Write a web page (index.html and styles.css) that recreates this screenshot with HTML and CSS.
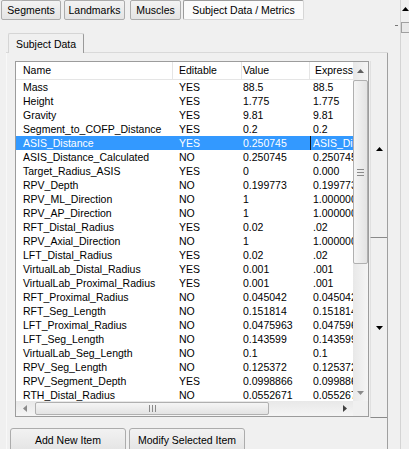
FILE: index.html
```html
<!DOCTYPE html>
<html>
<head>
<meta charset="utf-8">
<link rel="stylesheet" href="styles.css">
</head>
<body>
<div class="window">
  <div class="main">
    <div class="tabs">
      <div class="tab t1">Segments</div>
      <div class="tab t2">Landmarks</div>
      <div class="tab t3">Muscles</div>
      <div class="tab t4 active">Subject Data / Metrics</div>
    </div>
    <div class="subtabs">
      <div class="sub-edge"></div>
      <div class="subtab">Subject Data</div>
      <div class="sub-fill"></div>
    </div>
    <div class="pane">
      <div class="pane-body">
        <div class="list">
          <div class="list-content">
            <div class="row hdr"><span class="c1">Name</span><span class="c2">Editable</span><span class="c3">Value</span><span class="c4">Expression</span></div>
            <div class="row"><span class="c1">Mass</span><span class="c2">YES</span><span class="c3">88.5</span><span class="c4">88.5</span></div>
            <div class="row"><span class="c1">Height</span><span class="c2">YES</span><span class="c3">1.775</span><span class="c4">1.775</span></div>
            <div class="row"><span class="c1">Gravity</span><span class="c2">YES</span><span class="c3">9.81</span><span class="c4">9.81</span></div>
            <div class="row"><span class="c1">Segment_to_COFP_Distance</span><span class="c2">YES</span><span class="c3">0.2</span><span class="c4">0.2</span></div>
            <div class="row sel"><span class="c1">ASIS_Distance</span><span class="c2">YES</span><span class="c3">0.250745</span><span class="c4">ASIS_Distance</span></div>
            <div class="row"><span class="c1">ASIS_Distance_Calculated</span><span class="c2">NO</span><span class="c3">0.250745</span><span class="c4">0.250745</span></div>
            <div class="row"><span class="c1">Target_Radius_ASIS</span><span class="c2">YES</span><span class="c3">0</span><span class="c4">0.000</span></div>
            <div class="row"><span class="c1">RPV_Depth</span><span class="c2">NO</span><span class="c3">0.199773</span><span class="c4">0.199773</span></div>
            <div class="row"><span class="c1">RPV_ML_Direction</span><span class="c2">NO</span><span class="c3">1</span><span class="c4">1.000000</span></div>
            <div class="row"><span class="c1">RPV_AP_Direction</span><span class="c2">NO</span><span class="c3">1</span><span class="c4">1.000000</span></div>
            <div class="row"><span class="c1">RFT_Distal_Radius</span><span class="c2">YES</span><span class="c3">0.02</span><span class="c4">.02</span></div>
            <div class="row"><span class="c1">RPV_Axial_Direction</span><span class="c2">NO</span><span class="c3">1</span><span class="c4">1.000000</span></div>
            <div class="row"><span class="c1">LFT_Distal_Radius</span><span class="c2">YES</span><span class="c3">0.02</span><span class="c4">.02</span></div>
            <div class="row"><span class="c1">VirtualLab_Distal_Radius</span><span class="c2">YES</span><span class="c3">0.001</span><span class="c4">.001</span></div>
            <div class="row"><span class="c1">VirtualLab_Proximal_Radius</span><span class="c2">YES</span><span class="c3">0.001</span><span class="c4">.001</span></div>
            <div class="row"><span class="c1">RFT_Proximal_Radius</span><span class="c2">NO</span><span class="c3">0.045042</span><span class="c4">0.045042</span></div>
            <div class="row"><span class="c1">RFT_Seg_Length</span><span class="c2">NO</span><span class="c3">0.151814</span><span class="c4">0.151814</span></div>
            <div class="row"><span class="c1">LFT_Proximal_Radius</span><span class="c2">NO</span><span class="c3">0.0475963</span><span class="c4">0.0475963</span></div>
            <div class="row"><span class="c1">LFT_Seg_Length</span><span class="c2">NO</span><span class="c3">0.143599</span><span class="c4">0.143599</span></div>
            <div class="row"><span class="c1">VirtualLab_Seg_Length</span><span class="c2">NO</span><span class="c3">0.1</span><span class="c4">0.1</span></div>
            <div class="row"><span class="c1">RPV_Seg_Length</span><span class="c2">NO</span><span class="c3">0.125372</span><span class="c4">0.125372</span></div>
            <div class="row"><span class="c1">RPV_Segment_Depth</span><span class="c2">YES</span><span class="c3">0.0998866</span><span class="c4">0.0998866</span></div>
            <div class="row"><span class="c1">RTH_Distal_Radius</span><span class="c2">NO</span><span class="c3">0.0552671</span><span class="c4">0.0552671</span></div>
          </div>
          <div class="vscroll">
            <div class="sbtn"><svg width="7" height="4" viewBox="0 0 7 4"><polygon points="0,4 3.5,0 7,4" fill="#606060"/></svg></div>
            <div class="vthumb"><svg width="7" height="7" viewBox="0 0 7 7"><path d="M0 0.5H7M0 3.5H7M0 6.5H7" stroke="#8a8a8a" stroke-width="1"/></svg></div>
            <div class="vfill"></div>
            <div class="sbtn"><svg width="7" height="4" viewBox="0 0 7 4"><polygon points="0,0 7,0 3.5,4" fill="#8a8a8a"/></svg></div>
          </div>
          <div class="hscroll">
            <div class="hbtn"><svg width="4" height="7" viewBox="0 0 4 7"><polygon points="4,0 4,7 0,3.5" fill="#8a8a8a"/></svg></div>
            <div class="hthumb"><svg width="7" height="7" viewBox="0 0 7 7"><path d="M0.5 0V7M3.5 0V7M6.5 0V7" stroke="#8a8a8a" stroke-width="1"/></svg></div>
            <div class="hfill"></div>
            <div class="hbtn"><svg width="4" height="7" viewBox="0 0 4 7"><polygon points="0,0 4,3.5 0,7" fill="#404040"/></svg></div>
          </div>
          <div class="corner"></div>
        </div>
        <div class="spin">
          <div class="spin-btn up"><svg width="7" height="4" viewBox="0 0 7 4"><polygon points="0,4 3.5,0 7,4" fill="#000"/></svg></div>
          <div class="spin-btn down"><svg width="7" height="4" viewBox="0 0 7 4"><polygon points="0,0 7,0 3.5,4" fill="#000"/></svg></div>
        </div>
      </div>
      <div class="buttons">
        <div class="btn">Add New Item</div>
        <div class="btn">Modify Selected Item</div>
      </div>
    </div>
  </div>
  <div class="gutter"><div class="tick"></div></div>
  <div class="outer-scroll">
    <div class="obtn"><svg width="7" height="4" viewBox="0 0 7 4"><polygon points="0,4 3.5,0 7,4" fill="#000"/></svg></div>
    <div class="othumb"></div>
  </div>
</div>
</body>
</html>
```

FILE: styles.css
```css
* { box-sizing: border-box; }
html, body { margin: 0; padding: 0; }
body {
  background: #f0f0f0;
  font-family: "Liberation Sans", Arial, sans-serif;
  font-size: 10.5px;
  color: #000;
}
.window {
  display: flex;
  width: 409px;
  height: 449px;
  overflow: hidden;
}
.main {
  width: 388px;
  flex: none;
  display: flex;
  flex-direction: column;
}
.gutter { width: 12px; flex: none; }
.tick { margin: 25px 0 0 7px; width: 3px; height: 1px; background: #777; }
.outer-scroll {
  width: 9px;
  flex: none;
  border-left: 1px solid #d4d4d4;
  display: flex;
  flex-direction: column;
}
.obtn { height: 17px; display: flex; align-items: center; justify-content: center; padding-left: 1px; }
.othumb {
  margin-top: 5px;
  height: 11px;
  border: 1px solid #a0a0a0;
  border-right: none;
  background: #e9e9e9;
}

/* top button tabs */
.tabs { display: flex; height: 20px; padding-left: 1px; flex: none; }
.tab {
  height: 20px;
  border: 1px solid #acacac;
  border-radius: 2px;
  background: linear-gradient(#f3f3f3, #e4e4e4);
  display: flex;
  align-items: center;
  justify-content: center;
  font-size: 10.5px;
}
.t1 { width: 60px; }
.t2 { width: 61px; margin-left: 3px; }
.t3 { width: 51px; margin-left: 5px; }
.t4 { width: 121px; margin-left: 2px; }
.tab.active {
  background: #fbfbfb;
  border-color: #9c9c9c #d6d6d6 #d6d6d6 #9c9c9c;
}

/* inner tab strip */
.subtabs { display: flex; height: 20px; margin-top: 13px; margin-left: 6px; flex: none; }
.sub-edge { width: 2px; border-bottom: 1px solid #d9d9d9; }
.subtab {
  width: 76px;
  border: 1px solid #d5d5d5;
  border-right-color: #9a9a9a;
  border-bottom: none;
  border-radius: 2px 2px 0 0;
  display: flex;
  align-items: center;
  justify-content: center;
  padding-top: 1px;
}
.sub-fill { flex: 1; border-bottom: 1px solid #d9d9d9; }

.pane {
  margin-left: 6px;
  width: 382px;
  flex: 1;
  border-left: 1px solid #f8f8f8;
  border-right: 1px solid #a0a0a0;
  padding: 8px 0 0 3px;
}
.pane-body { display: flex; margin-left: 5px; }

/* list view */
.list {
  width: 354px;
  height: 356px;
  border: 1px solid #9c9c9c;
  display: grid;
  grid-template-columns: 337px 15px;
  grid-template-rows: 339px 15px;
  background: #fff;
}
.list-content { overflow: hidden; }
.row {
  display: grid;
  grid-template-columns: 157px 69px 68px 43px;
  height: 14px;
  line-height: 14px;
  white-space: nowrap;
}
.row span { overflow: hidden; }
.c1 { padding-left: 7px; }
.c2 { padding-left: 6px; }
.c3 { padding-left: 1px; }
.c4 { padding-left: 3px; }
.row.hdr {
  height: 18px;
  line-height: 17px;
  border-bottom: 1px solid #e5e5e5;
}
.hdr span { border-right: 1px solid #e5e5e5; }
.hdr .c4 { padding-left: 5px; border-right: none; }
.row.sel { background: #3399ff; color: #fff; }
.row.sel .c4 { border-left: 1px solid #1a1a1a; padding-left: 2px; }

.vscroll {
  display: flex;
  flex-direction: column;
  background: linear-gradient(to right, #e8e8e8, #f5f5f5);
}
.sbtn { height: 17px; flex: none; display: flex; align-items: center; justify-content: center; }
.vthumb {
  margin-top: 1px;
  height: 184px;
  flex: none;
  border: 1px solid #b0b0b0;
  border-radius: 2px;
  background: linear-gradient(to right, #f5f5f5, #e3e3e3);
  display: flex;
  align-items: center;
  justify-content: center;
}
.vfill { flex: 1; }
.hscroll {
  display: flex;
  background: linear-gradient(#e8e8e8, #f5f5f5);
}
.hbtn { width: 17px; flex: none; display: flex; align-items: center; justify-content: center; }
.hthumb {
  margin: 1px 0 1px 2px;
  width: 234px;
  flex: none;
  border: 1px solid #b0b0b0;
  border-radius: 2px;
  background: linear-gradient(#f5f5f5, #e3e3e3);
  display: flex;
  align-items: center;
  justify-content: center;
}
.hfill { flex: 1; }
.corner { background: #f0f0f0; }

/* tall up/down control */
.spin {
  margin-left: 1px;
  width: 17px;
  display: flex;
  flex-direction: column;
}
.spin-btn {
  border-left: 1px solid #e0e0e0;
  border-bottom: 1px solid #8a8a8a;
  display: flex;
  align-items: center;
  justify-content: center;
}
.spin-btn.up { height: 177px; }
.spin-btn.down { height: 180px; }

/* bottom buttons */
.buttons { display: flex; gap: 3px; margin-top: 10px; }
.btn {
  width: 116px;
  height: 24px;
  border: 1px solid #acacac;
  border-radius: 3px;
  background: linear-gradient(#f2f2f2, #e4e4e4);
  display: flex;
  align-items: center;
  justify-content: center;
  padding-bottom: 1px;
}
```
